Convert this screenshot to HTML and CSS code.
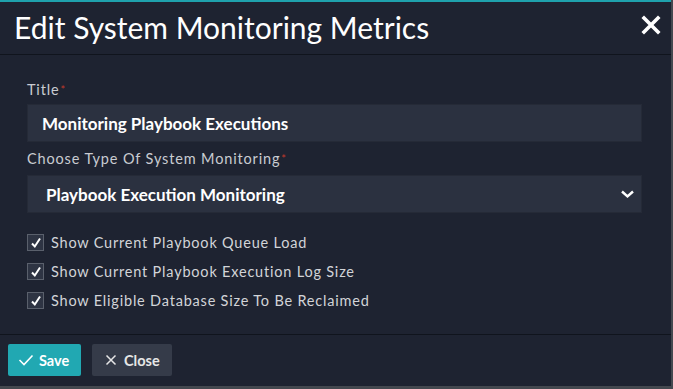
FILE: index.html
```html
<!DOCTYPE html>
<html>
<head>
<meta charset="utf-8">
<link rel="stylesheet" href="styles.css">
</head>
<body>
<div class="modal">
  <div class="header">
    <h1 class="title">Edit System Monitoring Metrics</h1>
    <span class="close-x">
      <svg width="20" height="20" viewBox="0 0 20 20"><path d="M3 3 L17 17 M17 3 L3 17" stroke="#fff" stroke-width="3.6" stroke-linecap="square"/></svg>
    </span>
  </div>
  <div class="body">
    <label class="label">Title<span class="req">*</span></label>
    <div class="input">Monitoring Playbook Executions</div>
    <label class="label label2">Choose Type Of System Monitoring<span class="req">*</span></label>
    <div class="input select">
      <span class="sel-text">Playbook Execution Monitoring</span>
      <svg width="15" height="10" viewBox="0 0 15 10"><path d="M2 2.5 L7.5 7.5 L13 2.5" stroke="#fff" stroke-width="2.4" fill="none"/></svg>
    </div>
    <div class="checks">
      <div class="check"><span class="box"><svg width="12" height="12" viewBox="0 0 12 12"><path d="M2 6.5 L4.8 9.5 L10 1.5" stroke="#fff" stroke-width="2" fill="none"/></svg></span>Show Current Playbook Queue Load</div>
      <div class="check"><span class="box"><svg width="12" height="12" viewBox="0 0 12 12"><path d="M2 6.5 L4.8 9.5 L10 1.5" stroke="#fff" stroke-width="2" fill="none"/></svg></span>Show Current Playbook Execution Log Size</div>
      <div class="check"><span class="box"><svg width="12" height="12" viewBox="0 0 12 12"><path d="M2 6.5 L4.8 9.5 L10 1.5" stroke="#fff" stroke-width="2" fill="none"/></svg></span>Show Eligible Database Size To Be Reclaimed</div>
    </div>
  </div>
  <div class="footer">
    <button class="btn btn-save"><svg width="16" height="12" viewBox="0 0 16 12"><path d="M1.5 6 L6 10.5 L14.5 1.5" stroke="#fff" stroke-width="1.6" fill="none"/></svg>Save</button>
    <button class="btn btn-close"><svg width="12" height="12" viewBox="0 0 12 12"><path d="M1.5 1.5 L10.5 10.5 M10.5 1.5 L1.5 10.5" stroke="#e6e6e6" stroke-width="1.5"/></svg>Close</button>
  </div>
</div>
</body>
</html>
```
FILE: styles.css
```css
html, body {
  margin: 0;
  padding: 0;
}
body {
  background: #44484f;
  width: 673px;
  height: 389px;
  font-family: Lato, "Open Sans", sans-serif;
  overflow: hidden;
}
.modal {
  width: 671px;
  height: 386px;
  background: #1e2331;
  border-top: 2px solid #1fa2ad;
  box-sizing: border-box;
  display: flex;
  flex-direction: column;
}
.header {
  height: 53px;
  border-bottom: 1px solid #10141d;
  display: flex;
  align-items: center;
  justify-content: space-between;
  padding: 0 10px 0 14px;
  box-sizing: border-box;
  flex: none;
}
.title {
  margin: 0;
  font-weight: 400;
  font-size: 30px;
  color: #fff;
  letter-spacing: 0;
  padding-bottom: 2px;
}
.close-x {
  display: flex;
  margin-top: -6px;
}
.body {
  padding: 26px 29px 0 27px;
  height: 280px;
  box-sizing: border-box;
  border-bottom: 1px solid #10141d;
  flex: none;
}
.label {
  display: block;
  font-size: 14.5px;
  color: #c9ccd1;
  letter-spacing: 0.85px;
  font-weight: 400;
  line-height: 17px;
  margin-bottom: 6px;
}
.label2 {
  margin-top: 8px;
  margin-bottom: 8px;
}
.req {
  color: #c0392b;
  font-size: 11px;
  vertical-align: top;
  margin-left: 1px;
}
.input {
  height: 38px;
  background: #2b3140;
  border: 1px solid #252a37;
  box-sizing: border-box;
  color: #fff;
  font-size: 17px;
  font-weight: 700;
  letter-spacing: 0;
  display: flex;
  align-items: center;
  padding-left: 14px;
}
.select {
  justify-content: space-between;
  padding-left: 18px;
  padding-right: 6px;
}
.checks {
  margin-top: 21px;
  display: flex;
  flex-direction: column;
  gap: 12px;
}
.check {
  display: flex;
  align-items: center;
  font-size: 14.5px;
  color: #d2d4d8;
  letter-spacing: 0.8px;
  line-height: 17px;
}
.box {
  width: 17px;
  height: 17px;
  box-sizing: border-box;
  border: 1px solid #5a606c;
  background: #2e3443;
  display: flex;
  align-items: center;
  justify-content: center;
  margin-right: 7px;
}
.footer {
  display: flex;
  align-items: center;
  gap: 11px;
  padding: 9px 8px 0 8px;
}
.btn {
  height: 32px;
  border: none;
  border-radius: 2px;
  font-family: Lato, "Open Sans", sans-serif;
  font-size: 14.5px;
  font-weight: 700;
  color: #fff;
  display: flex;
  align-items: center;
  gap: 5px;
  padding: 0 10px;
  cursor: pointer;
}
.btn-save {
  background: #21a8b2;
  width: 73px;
}
.btn-close {
  background: #353b49;
  width: 80px;
  color: #e6e6e6;
  padding-left: 13px;
  gap: 7px;
}
```
